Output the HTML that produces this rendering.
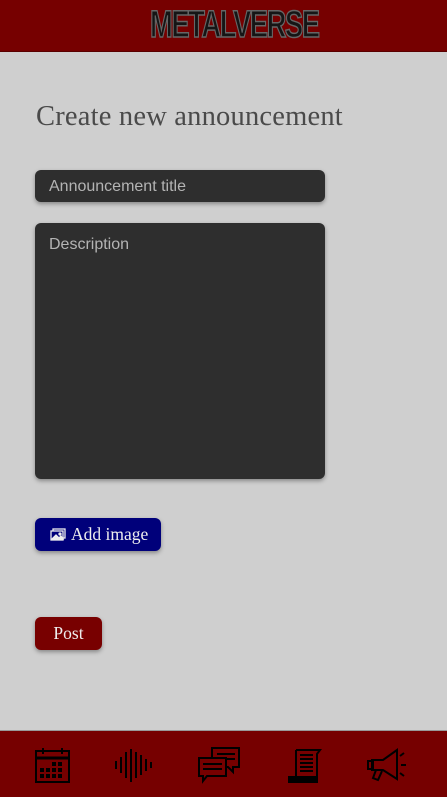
<!DOCTYPE html>
<html><head><meta charset="utf-8"><style>
html,body{margin:0;padding:0;width:447px;height:797px;overflow:hidden;background:#cfcfcf;font-family:"Liberation Sans",sans-serif;position:relative}
.hdr{position:absolute;left:0;top:0;width:447px;height:51px;background:#760000;border-bottom:1px solid #5a0000}
.logo{position:absolute;left:122px;top:5px;width:200px;height:40px;text-align:center;font-family:"Liberation Sans",sans-serif;font-weight:bold;font-size:38px;line-height:40px;color:#151515;letter-spacing:-2px;transform:scaleX(0.72);-webkit-text-stroke:1.5px #666;}
h1{position:absolute;left:36px;top:101px;margin:0;font-family:"Liberation Serif",serif;font-weight:normal;font-size:28.5px;color:#4a4a4a;letter-spacing:0.2px}
.in{position:absolute;left:35px;width:290px;background:#2e2e2e;border-radius:6px;box-shadow:0 2px 4px rgba(0,0,0,.35);color:#b4b4b4;font-size:16px;box-sizing:border-box;padding-left:14px}
.btn{position:absolute;left:35px;border-radius:6px;box-shadow:0 2px 4px rgba(0,0,0,.35);color:#eee;font-family:"Liberation Serif",serif;font-size:17.5px;text-align:center}
.ftr{position:absolute;left:0;top:730px;width:447px;height:67px;background:#760000;border-top:1px solid #999}
svg{position:absolute}
</style></head><body>
<div class="hdr"><div class="logo">METALVERSE</div></div>
<h1>Create new announcement</h1>
<div class="in" style="top:170px;height:32px;line-height:34px">Announcement title</div>
<div class="in" style="top:223px;height:256px;padding-top:13px">Description</div>
<div class="btn" style="top:518px;width:126px;height:33px;line-height:33px;background:#00007a;padding-left:36px;text-align:left;box-sizing:border-box">Add image</div>
<svg style="left:50px;top:528px" width="16" height="13" viewBox="0 0 16 13" fill="none" stroke="#eee" stroke-width="1.3"><rect x="3" y="1" width="12" height="9"/><rect x="1" y="3" width="12" height="9" fill="#00007a"/><path d="M2 11l4-4 3 3 2-2 2 3z" fill="#eee"/><circle cx="10" cy="6" r="1" fill="#eee"/></svg>
<div class="btn" style="top:617px;width:67px;height:33px;line-height:33px;background:#780000">Post</div>
<div class="ftr">
<svg style="left:35px;top:16px" width="35" height="36" viewBox="0 0 35 36" fill="none" stroke="#000" stroke-width="2">
<rect x="1" y="4" width="33" height="31"/><line x1="1" y1="11" x2="34" y2="11" stroke-width="3"/><line x1="8" y1="1" x2="8" y2="7"/><line x1="27" y1="1" x2="27" y2="7"/>
<g fill="#000" stroke="none"><rect x="17" y="15" width="4" height="4"/><rect x="23" y="15" width="4" height="4"/><rect x="5" y="21" width="4" height="4"/><rect x="11" y="21" width="4" height="4"/><rect x="17" y="21" width="4" height="4"/><rect x="23" y="21" width="4" height="4"/><rect x="5" y="27" width="4" height="4"/><rect x="11" y="27" width="4" height="4"/><rect x="17" y="27" width="4" height="4"/><rect x="23" y="27" width="4" height="4"/></g></svg>
<svg style="left:114px;top:16px" width="42" height="37" viewBox="0 0 42 37" stroke="#000" stroke-width="2">
<line x1="2" y1="14" x2="2" y2="22"/><line x1="7" y1="10" x2="7" y2="26"/><line x1="12" y1="5" x2="12" y2="31"/><line x1="17" y1="2" x2="17" y2="35"/><line x1="22" y1="5" x2="22" y2="31"/><line x1="27" y1="8" x2="27" y2="28"/><line x1="32" y1="12" x2="32" y2="24"/><line x1="37" y1="15" x2="37" y2="21"/></svg>
<svg style="left:198px;top:15px" width="44" height="38" viewBox="0 0 44 38" fill="#760000" stroke="#000" stroke-width="2">
<path d="M14 2h27v19h-6v5l-5-5H14z"/><line x1="19" y1="8" x2="37" y2="8"/><line x1="19" y1="13" x2="37" y2="13"/>
<path d="M1 12h27v18H9l-4 5v-5H1z"/><line x1="5" y1="18" x2="24" y2="18"/><line x1="5" y1="23" x2="24" y2="23"/></svg>
<svg style="left:288px;top:17px" width="36" height="36" viewBox="0 0 36 36" fill="none" stroke="#000" stroke-width="2">
<path d="M8 2h24l-3 4v28H8"/><path d="M8 2v26"/><path d="M1 34h26v-5H1z" fill="#000"/><line x1="12" y1="7" x2="25" y2="7"/><line x1="12" y1="11" x2="25" y2="11"/><line x1="12" y1="15" x2="25" y2="15"/><line x1="12" y1="19" x2="25" y2="19"/><line x1="12" y1="23" x2="25" y2="23"/></svg>
<svg style="left:367px;top:17px" width="40" height="36" viewBox="0 0 40 36" fill="none" stroke="#000" stroke-width="2">
<path d="M5 12h11l14-10v29l-14-9H5z"/><rect x="1" y="13" width="5" height="8"/><path d="M9 22l-3 8 5 2 4-9"/><line x1="33" y1="8" x2="37" y2="5"/><line x1="34" y1="17" x2="39" y2="17"/><line x1="33" y1="25" x2="37" y2="28"/></svg>
</div>
</body></html>
